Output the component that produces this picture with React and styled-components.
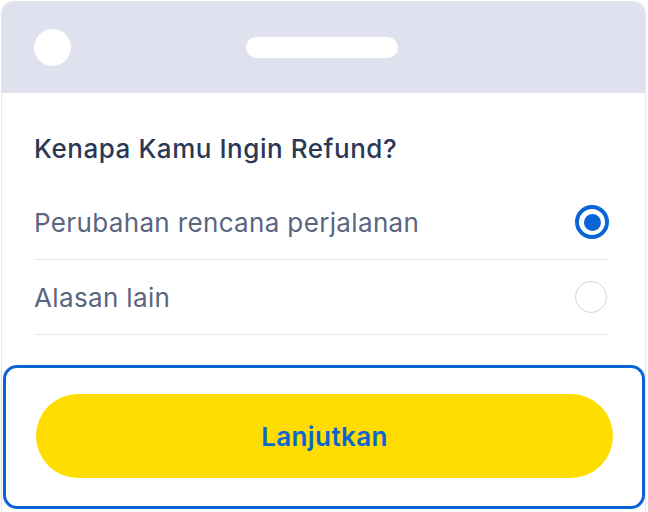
import React, { useState } from 'react';
import styled, { createGlobalStyle } from 'styled-components';

const GlobalStyle = createGlobalStyle`
  html, body {
    margin: 0;
    padding: 0;
    background: #ffffff;
    font-family: Inter, "Noto Sans", sans-serif;
  }
`;

const Page = styled.div`
  width: 648px;
  height: 512px;
  padding: 1px 2px 0 1px;
  box-sizing: border-box;
  overflow: hidden;
`;

const Card = styled.div`
  height: 520px;
  border: 1px solid #e4e7f0;
  border-radius: 12px 12px 0 0;
  overflow: hidden;
  background: #ffffff;
`;

const Header = styled.div`
  height: 91px;
  background: #dfe2ee;
  display: grid;
  grid-template-columns: 1fr auto 1fr;
  align-items: center;
  padding: 0 32px;
`;

const Avatar = styled.div`
  width: 37px;
  height: 37px;
  border-radius: 50%;
  background: #ffffff;
`;

const Pill = styled.div`
  width: 152px;
  height: 21px;
  border-radius: 11px;
  background: #ffffff;
  margin-right: 4px;
`;

const Body = styled.div`
  padding: 0 36px 0 32px;
`;

const Title = styled.h1`
  margin: 39px 0 19px;
  font-size: 26px;
  line-height: 34px;
  font-weight: 500;
  color: #2b3955;
  letter-spacing: 0.55px;
`;

const Option = styled.label`
  display: flex;
  align-items: center;
  justify-content: space-between;
  height: 74px;
  border-bottom: 1px solid #e6e8ef;
  cursor: pointer;
`;

const OptionText = styled.span`
  font-size: 26px;
  color: #5a6580;
  letter-spacing: 0.35px;
`;

const Radio = styled.span`
  width: ${(p) => (p.checked ? 34 : 32)}px;
  height: ${(p) => (p.checked ? 34 : 32)}px;
  box-sizing: border-box;
  border-radius: 50%;
  border: ${(p) => (p.checked ? '4px solid #0a64d6' : '1px solid #d3d6df')};
  display: flex;
  align-items: center;
  justify-content: center;
  margin-right: ${(p) => (p.checked ? 0 : 2)}px;

  &::after {
    content: '';
    display: ${(p) => (p.checked ? 'block' : 'none')};
    width: 17px;
    height: 17px;
    border-radius: 50%;
    background: #0a64d6;
  }
`;

const Footer = styled.div`
  margin: 30px 0 0 1px;
  border: 3px solid #0a64d6;
  border-radius: 14px;
  padding: 26px 29px 28px 30px;
`;

const Button = styled.button`
  display: block;
  width: 100%;
  height: 84px;
  border: none;
  border-radius: 42px;
  background: #ffdd00;
  color: #0a64d6;
  font-family: Inter, "Noto Sans", sans-serif;
  font-size: 26px;
  font-weight: 600;
  letter-spacing: 0.4px;
  cursor: pointer;
`;

const reasons = ['Perubahan rencana perjalanan', 'Alasan lain'];

export default function App() {
  const [selected, setSelected] = useState(0);

  return (
    <Page>
      <GlobalStyle />
      <Card>
        <Header>
          <Avatar />
          <Pill />
          <span />
        </Header>
        <Body>
          <Title>Kenapa Kamu Ingin Refund?</Title>
          {reasons.map((r, i) => (
            <Option key={r} onClick={() => setSelected(i)}>
              <OptionText>{r}</OptionText>
              <Radio checked={selected === i} />
            </Option>
          ))}
        </Body>
        <Footer>
          <Button>Lanjutkan</Button>
        </Footer>
      </Card>
    </Page>
  );
}
